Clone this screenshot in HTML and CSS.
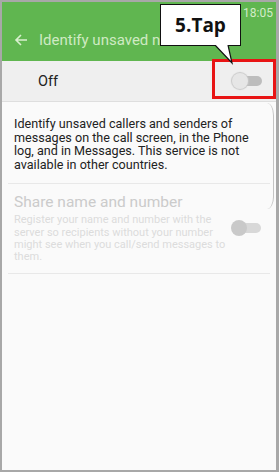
FILE: index.html
```html
<!DOCTYPE html>
<html lang="en">
<head>
    <meta charset="UTF-8">
    <meta name="viewport" content="width=device-width, initial-scale=1.0">
    <title>Identify unsaved numbers</title>
    <link rel="stylesheet" href="styles.css">
</head>
<body>

    <div class="frame">

        <!-- Barra verde -->
        <header class="appbar">
            <div class="status">18:05</div>
            <div class="titlebar">
                <svg class="back" width="14" height="14" viewBox="0 0 14 14">
                    <path d="M13 7H2M7 2L2 7l5 5" fill="none" stroke="#d9f0cf" stroke-width="1.6"/>
                </svg>
                <span class="title">Identify unsaved n</span>
            </div>
        </header>

        <!-- Interruptor principal -->
        <div class="offrow">
            <span>Off</span>
            <span class="toggle"><span class="thumb"></span></span>
        </div>

        <p class="desc">Identify unsaved callers and senders of messages on the call screen, in the Phone log, and in Messages. This service is not available in other countries.</p>

        <div class="item">
            <div class="item-text">
                <div class="item-title">Share name and number</div>
                <div class="item-sub">Register your name and number with the server so recipients without your number might see when you call/send messages to them.</div>
            </div>
            <span class="toggle disabled"><span class="thumb"></span></span>
        </div>

        <div class="edge"></div>

        <!-- Marca de la captura -->
        <div class="highlight"></div>
        <div class="callout">
            <svg class="tail" width="24" height="20" viewBox="0 0 24 20">
                <path d="M2 0 L19 18 L15 0" fill="#fff" stroke="#111" stroke-width="1.2"/>
            </svg>
            <span>5.Tap</span>
        </div>

    </div>

</body>
</html>
```

FILE: styles.css
```css
body { margin: 0; font-family: Roboto, "Noto Sans", sans-serif; }
.frame { position: relative; width: 279px; height: 472px; box-sizing: border-box; border: 2px solid #a8a8a8; border-right-width: 3px; background: #fafafa; overflow: hidden; }

.appbar { background: #60b650; height: 59px; display: flex; flex-direction: column; }
.status { align-self: flex-end; color: #d3ecc8; font-size: 12px; padding: 4px 3px 0 0; height: 17px; }
.titlebar { display: flex; align-items: center; flex: 1; padding: 0 0 4px 12px; gap: 11px; }
.back { flex: none; }
.title { color: #cfeac3; font-size: 15px; white-space: nowrap; }

.offrow { height: 40px; background: #efefef; border-bottom: 1px solid #dedede; display: flex; align-items: center; justify-content: space-between; padding: 0 14px 0 36px; font-size: 14.5px; color: #222; }

.toggle { position: relative; width: 29px; height: 10px; border-radius: 5px; background: #bdbdbd; }
.toggle .thumb { position: absolute; left: -1px; top: -3px; width: 16px; height: 16px; border-radius: 50%; background: #e6e6e6; box-shadow: 0 0 1px 1px #c8c8c8; }
.toggle.disabled { background: #d8d8d8; }
.toggle.disabled .thumb { background: #c9c9c9; box-shadow: none; }

.desc { margin: 0 6px; padding: 15px 6px 12px 6px; font-size: 12.6px; line-height: 13.6px; color: #222; border-bottom: 1px solid #e8e8e8; }

.item { margin: 0 6px; padding: 9px 8px 10px 6px; display: flex; align-items: center; gap: 6px; border-bottom: 1px solid #e8e8e8; }
.item-text { width: 212px; flex: none; }
.item-title { font-size: 15.5px; color: #cbcbcb; margin-bottom: 3px; }
.item-sub { font-size: 11px; line-height: 12.2px; color: #dcdcdc; }
.item .toggle { flex: none; }

.edge { position: absolute; right: 2px; top: 101px; width: 6px; height: 106px; border-right: 1px solid #c4c4c4; border-top-right-radius: 8px 14px; border-bottom-right-radius: 8px 14px; }

.highlight { position: absolute; left: 210px; top: 57px; width: 58px; height: 34px; border: 3px solid #e81414; }
.callout { position: absolute; left: 158px; top: 2px; width: 79px; height: 40px; background: #fff; border: 1px solid #111; display: flex; align-items: center; justify-content: center; font-family: "Open Sans", sans-serif; font-weight: bold; font-size: 19px; color: #111; }
.tail { position: absolute; left: 52px; top: 40px; }
```
